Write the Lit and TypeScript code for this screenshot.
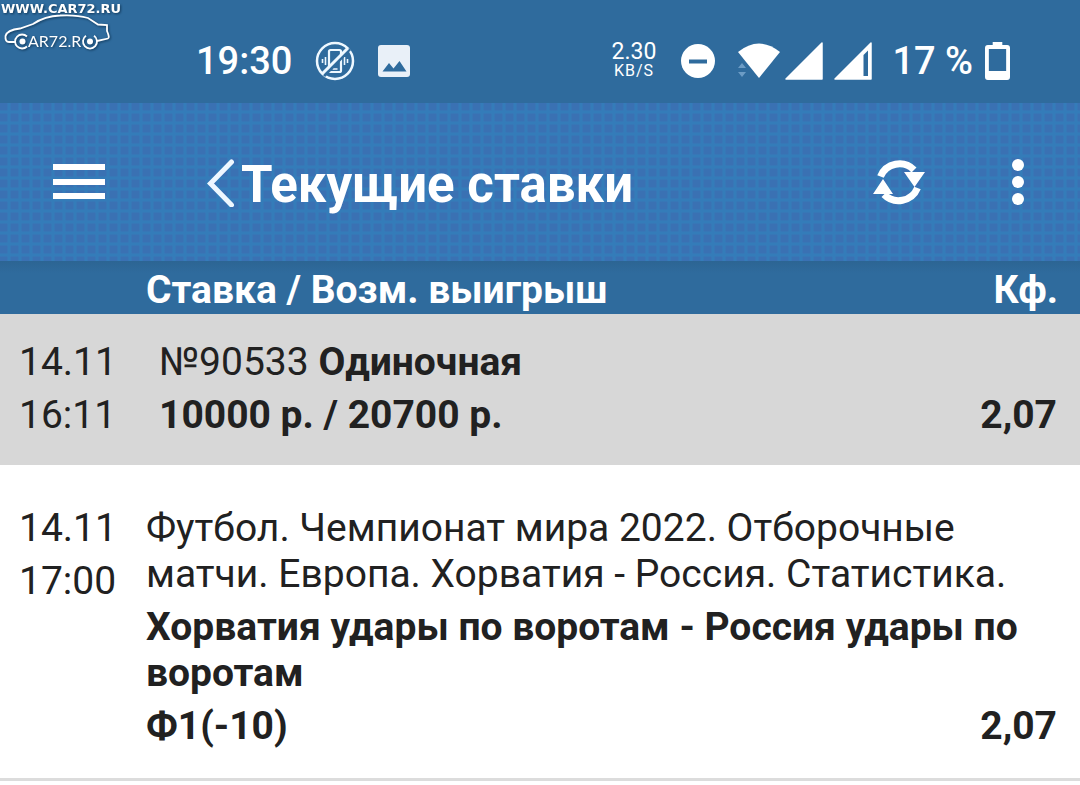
import { LitElement, html, css } from "lit";
import { customElement } from "lit/decorators.js";

@customElement("app-root")
export class AppRoot extends LitElement {
  static styles = css`
    :host {
      display: block;
      min-height: 100vh;
      position: relative;
      background: #fff;
      color: #212121;
      font-family: Roboto, "Noto Sans", sans-serif;
      font-size: 39px;
      line-height: 46px;
    }
    svg { display: block; flex: none; }
    .watermark {
      position: absolute;
      left: 0;
      top: 0;
      color: #fff;
      filter: drop-shadow(1px 1px 1px #123a5c);
    }
    .status {
      display: flex;
      justify-content: space-between;
      align-items: center;
      box-sizing: border-box;
      height: 103px;
      padding: 18px 70px 0 196px;
      background: #2f6b9d;
      color: #fff;
      font-weight: 500;
      font-size: 38px;
    }
    .group { display: flex; align-items: center; }
    .clock { margin-right: 23px; }
    .mute { margin-right: 23px; }
    .speed {
      display: flex;
      flex-direction: column;
      align-items: center;
      margin-right: 25px;
      font-weight: 400;
      font-size: 23px;
      line-height: 20px;
    }
    .unit { font-size: 16px; line-height: 18px; letter-spacing: 1px; }
    .dnd { margin-right: 21px; }
    .wifi { margin-right: 5px; }
    .signal { margin-right: 11px; }
    .signal2 { margin-right: 20px; }
    .percent { margin-right: 12px; }
    .bar {
      display: flex;
      align-items: center;
      box-sizing: border-box;
      height: 158px;
      padding: 0 56px 0 52px;
      color: #fff;
      background-color: #3a71b3;
      background-image:
        linear-gradient(to right, transparent 7px, #347cb9 8px, #347cb9 10px, transparent 11px),
        linear-gradient(to bottom, transparent 7px, #347cb9 8px, #347cb9 10px, transparent 11px);
      background-size: 11px 11px;
    }
    button {
      border: 0;
      padding: 0;
      background: none;
      color: inherit;
      font: inherit;
      cursor: pointer;
    }
    .menu { margin-right: 101px; }
    .back { margin-right: 6px; }
    h1 {
      flex: 1;
      margin: 0;
      padding-top: 6px;
      font-size: 51px;
      line-height: 60px;
      font-weight: 700;
      white-space: nowrap;
    }
    .refresh { margin-right: 87px; }
    table { width: 100%; border-collapse: collapse; table-layout: fixed; }
    .c-date { width: 146px; }
    .c-coef { width: 140px; }
    th, td { padding: 0; text-align: left; vertical-align: top; }
    thead th {
      height: 53px;
      box-sizing: border-box;
      padding-top: 6px;
      background: linear-gradient(#2c6593, #2f6b9d 12px);
      color: #fff;
      line-height: 46px;
    }
    thead .coef { padding-right: 22px; text-align: right; }
    .head { background: #d7d7d7; }
    .head td { padding-top: 22px; padding-bottom: 23px; line-height: 53px; }
    .head .info { padding-left: 13px; }
    .date { white-space: nowrap; }
    td.date { padding-left: 19px; line-height: 53px; }
    .info { padding-right: 23px; }
    .event td { padding-top: 37px; padding-bottom: 29px; border-bottom: 3px solid #dcdcdc; }
    .event .info { padding-top: 40px; }
    p { margin: 0; }
    .match { margin-top: 7px; font-weight: 700; }
    .line { display: flex; justify-content: space-between; font-weight: 700; }
    .event .line { margin-top: 7px; }
  `;

  render() {
    return html`
      <header class="status">
        <div class="group">
          <span class="clock">19:30</span>
          <svg class="mute" width="40" height="40" viewBox="0 0 40 40" fill="none" stroke="#eef8ff">
            <circle cx="20" cy="20" r="18" stroke-width="2.5" />
            <rect x="14" y="9" width="12" height="22" rx="1.5" stroke-width="2.2" />
            <path d="M17.5 28h5M10.500 16v8M7.500 18v4M29.500 16v8M32.500 18v4" stroke-width="1.6" />
            <path d="M9 35L35 8" stroke="#2f6b9d" stroke-width="3" />
            <path d="M7 33L33 7" stroke-width="3" />
          </svg>
          <svg width="32" height="32" viewBox="0 0 32 32">
            <rect width="32" height="32" rx="3" fill="#e9f0f8" />
            <path d="M4.500 26.500L11 18l4.500 5.500L21.500 16l7 10.500z" fill="#2f6b9d" />
          </svg>
        </div>
        <div class="group">
          <div class="speed"><span>2.30</span><span class="unit">KB/S</span></div>
          <svg class="dnd" width="34" height="34" viewBox="0 0 34 34">
            <circle cx="17" cy="17" r="17" fill="#fff" />
            <path d="M8 17.500h18" stroke="#2f6b9d" stroke-width="4" />
          </svg>
          <svg class="wifi" width="44" height="36" viewBox="0 0 44 36">
            <path d="M23 35L2 9Q23-8 44 9z" fill="#fff" />
            <path d="M2 25L6 20L10 25zM2 29L6 34L10 29z" fill="#6c9cc5" />
          </svg>
          <svg class="signal" width="38" height="38" viewBox="0 0 38 38">
            <path d="M1 37L37 1V37z" fill="#fff" stroke="#fff" stroke-width="1.500" stroke-linejoin="round" />
          </svg>
          <svg class="signal2" width="38" height="38" viewBox="0 0 38 38">
            <path d="M1 37L37 1V37z" fill="#fff" stroke="#fff" stroke-width="1.500" stroke-linejoin="round" />
            <path d="M29.500 13L34 8.500V34h-4.500z" fill="#2f6b9d" />
          </svg>
          <span class="percent">17 %</span>
          <svg width="25" height="38" viewBox="0 0 26 38" preserveAspectRatio="none">
            <path d="M8 0h10v3h5q3 0 3 3v29q0 3-3 3H3q-3 0-3-3V6q0-3 3-3h5zM4 7v22h18V7z" fill="#fff" fill-rule="evenodd" />
          </svg>
        </div>
      </header>
      <svg class="watermark" width="128" height="54" viewBox="0 0 128 54" fill="none" stroke="currentColor" role="img" aria-label="CAR72.RU">
        <path d="M15 42H9Q5 42 5.500 36Q7 30 20 28.500L33 24Q45 16 60 15.500Q76 14.500 88 18L98 24.500L107 25V31Q110 38 108 38.500L97 41" stroke-width="1.800" />
        <path d="M27 36.500A7 7 0 1 0 27 46.500M86 35.800A7 7 0 1 0 94 35.800" stroke-width="1.800" />
        <g fill="currentColor" stroke="none">
          <circle cx="22.500" cy="41.500" r="3" />
          <circle cx="90" cy="41.500" r="3" />
          <text x="1" y="13" font-family="DejaVu Sans, sans-serif" font-size="13" font-weight="700">WWW.CAR72.RU</text>
          <text x="28" y="47" font-family="Lato, sans-serif" font-size="16">AR72.R</text>
        </g>
      </svg>
      <nav class="bar">
        <button class="menu" aria-label="Меню">
          <svg width="53" height="36" viewBox="0 0 53 36" fill="#fff">
            <path d="M1 0h52v6H1zM1 15h52v6H1zM1 29h52v6H1z" />
          </svg>
        </button>
        <button class="back" aria-label="Назад">
          <svg width="29" height="50" viewBox="0 0 29 50" fill="none" stroke="#eef7ff" stroke-width="5" stroke-linecap="round">
            <path d="M25.500 5L4.500 26.500L25.500 48" />
          </svg>
        </button>
        <h1>Текущие ставки</h1>
        <button class="refresh" aria-label="Обновить">
          <svg width="52" height="50" viewBox="0 0 52 50">
            <g fill="none" stroke="#fff" stroke-width="7">
              <path d="M7.500 19.500A20.500 20.500 0 0 1 41 13" />
              <path d="M44.500 31A20.500 20.500 0 0 1 11 37.500" />
            </g>
            <path d="M31 15L52 15L41.500 30zM0 37L10 22L20 37z" fill="#fff" />
          </svg>
        </button>
        <button aria-label="Ещё">
          <svg width="12" height="48" viewBox="0 0 12 48" fill="#fff">
            <circle cx="6" cy="7" r="6" /><circle cx="6" cy="24" r="6" /><circle cx="6" cy="41" r="6" />
          </svg>
        </button>
      </nav>
      <table>
        <colgroup><col class="c-date" /><col /><col class="c-coef" /></colgroup>
        <thead>
          <tr>
            <th></th>
            <th scope="col">Ставка / Возм. выигрыш</th>
            <th scope="col" class="coef">Кф.</th>
          </tr>
        </thead>
        <tbody>
          <tr class="head">
            <td class="date">14.11<br />16:11</td>
            <td class="info" colspan="2">
              <p>№90533 <b>Одиночная</b></p>
              <div class="line"><span>10000 р. / 20700 р.</span><span>2,07</span></div>
            </td>
          </tr>
          <tr class="event">
            <td class="date">14.11<br />17:00</td>
            <td class="info" colspan="2">
              <p>Футбол. Чемпионат мира 2022. Отборочные матчи. Европа. Хорватия - Россия. Статистика.</p>
              <p class="match">Хорватия удары по воротам - Россия удары по воротам</p>
              <div class="line"><span>Ф1(-10)</span><span>2,07</span></div>
            </td>
          </tr>
        </tbody>
      </table>
    `;
  }
}
